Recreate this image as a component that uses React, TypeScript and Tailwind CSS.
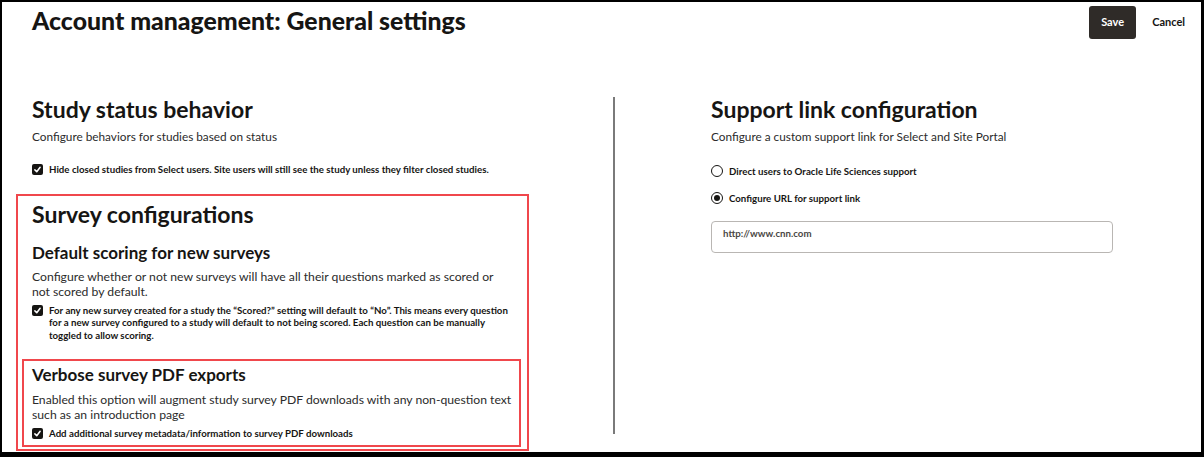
import React from 'react';

function Check() {
  return (
    <span className="mt-[1px] flex h-[11px] w-[11px] shrink-0 items-center justify-center rounded-[2px] bg-[#161513]">
      <svg viewBox="0 0 12 12" className="h-[9px] w-[9px]" fill="none" stroke="white" strokeWidth="2" strokeLinecap="round" strokeLinejoin="round">
        <path d="M2.5 6.5 L5 9 L9.5 3" />
      </svg>
    </span>
  );
}

function Radio({ on }: { on?: boolean }) {
  return (
    <span className="flex h-[12px] w-[12px] shrink-0 items-center justify-center rounded-full border-[1.5px] border-[#161513] bg-white">
      {on && <span className="h-[6px] w-[6px] rounded-full bg-[#161513]" />}
    </span>
  );
}

function CheckRow({ children }: { children: React.ReactNode }) {
  return (
    <div className="flex items-start gap-[6px]">
      <Check />
      <p className="text-[9.7px] font-bold leading-[12.5px] text-[#161513]">{children}</p>
    </div>
  );
}

export default function App() {
  return (
    <div
      className="h-[457px] w-[1204px] overflow-hidden border-b-[5px] border-l-2 border-r-[3px] border-t-2 border-black bg-white text-[#161513]"
      style={{ fontFamily: 'Lato, "Noto Sans", sans-serif' }}
    >
      <header className="flex items-start justify-between pl-[30px] pr-[16px] pt-[4px]">
        <h1 className="text-[24.8px] font-black leading-[30px]">Account management: General settings</h1>
        <div className="flex items-center gap-[16px]">
          <button className="h-[33px] w-[47px] rounded-[3px] bg-[#2f2b28] text-[11px] font-bold text-white">Save</button>
          <button className="text-[11px] font-bold text-[#161513]">Cancel</button>
        </div>
      </header>

      <main className="mt-[56px] flex">
        <div className="w-[527px] shrink-0 pl-[14px]">
          <section className="pl-[16px]">
            <h2 className="text-[23px] font-bold leading-[28px]">Study status behavior</h2>
            <p className="mt-[6px] text-[11.8px] leading-[16px] text-[#2b2b2b]">Configure behaviors for studies based on status</p>
            <div className="mt-[18px]">
              <CheckRow>Hide closed studies from Select users. Site users will still see the study unless they filter closed studies.</CheckRow>
            </div>
          </section>

          <div className="mt-[18px] border-2 border-[#f0474c] pb-[2px] pl-[4px] pr-[6px] pt-[4px]">
            <div className="pl-[10px]">
              <h2 className="text-[23px] font-bold leading-[28px]">Survey configurations</h2>
              <h3 className="mt-[14px] text-[17px] font-bold leading-[22px]">Default scoring for new surveys</h3>
              <p className="mt-[5px] text-[12.2px] leading-[15px] text-[#2b2b2b]">
                Configure whether or not new surveys will have all their questions marked as scored or
                <br />
                not scored by default.
              </p>
              <div className="mt-[5px]">
                <CheckRow>
                  For any new survey created for a study the “Scored?” setting will default to “No”. This means every question
                  <br />
                  for a new survey configured to a study will default to not being scored. Each question can be manually
                  <br />
                  toggled to allow scoring.
                </CheckRow>
              </div>
            </div>

            <div className="mt-[18px] border-2 border-[#f0474c] pb-[5px] pl-[8px] pr-[2px] pt-[3px]">
              <h3 className="text-[17px] font-bold leading-[22px]">Verbose survey PDF exports</h3>
              <p className="mt-[6px] text-[12.2px] leading-[15px] text-[#2b2b2b]">
                Enabled this option will augment study survey PDF downloads with any non-question text
                <br />
                such as an introduction page
              </p>
              <div className="mt-[5px]">
                <CheckRow>Add additional survey metadata/information to survey PDF downloads</CheckRow>
              </div>
            </div>
          </div>
        </div>

        <div className="ml-[84px] mt-[2px] h-[337px] w-[2px] shrink-0 bg-[#7a7a7a]" />

        <section className="ml-[96px] w-[402px]">
          <h2 className="text-[23px] font-bold leading-[28px]">Support link configuration</h2>
          <p className="mt-[6px] text-[11.8px] leading-[16px] text-[#2b2b2b]">Configure a custom support link for Select and Site Portal</p>
          <div className="mt-[20px] flex flex-col gap-[15px]">
            <label className="flex items-center gap-[6px]">
              <Radio />
              <span className="text-[9.7px] font-bold leading-[12px]">Direct users to Oracle Life Sciences support</span>
            </label>
            <label className="flex items-center gap-[6px]">
              <Radio on />
              <span className="text-[9.7px] font-bold leading-[12px]">Configure URL for support link</span>
            </label>
          </div>
          <div className="mt-[17px] h-[32px] w-[402px] rounded-[4px] border border-[#b9b6b3] px-[11px] pt-[5px] text-[9.7px] font-bold leading-[12px] text-[#4a4744]">
            http://www.cnn.com
          </div>
        </section>
      </main>
    </div>
  );
}
